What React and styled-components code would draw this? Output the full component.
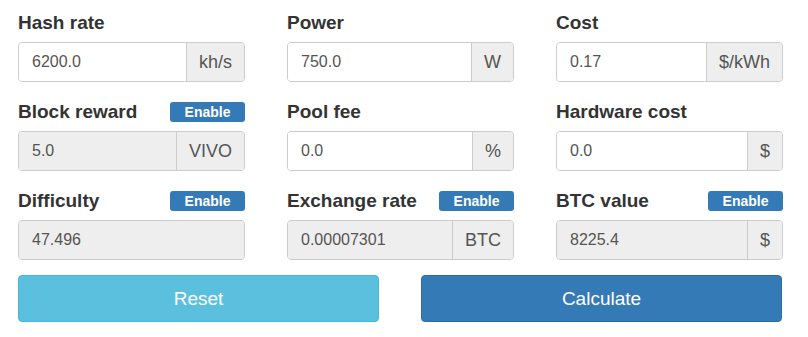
import React from 'react'
import styled, { createGlobalStyle } from 'styled-components'

const GlobalStyle = createGlobalStyle`
  body {
    margin: 0;
    background: #ffffff;
    font-family: "Liberation Sans", Arial, sans-serif;
    color: #333333;
  }
`

const Wrapper = styled.div`
  width: 808px;
  height: 337px;
  box-sizing: border-box;
  padding: 11px 25px 0 18px;
`

const Grid = styled.div`
  display: grid;
  grid-template-columns: repeat(3, 227px);
  column-gap: 42px;
  row-gap: 18px;
`

const Field = styled.div`
  display: flex;
  flex-direction: column;
`

const FieldHead = styled.div`
  height: 24px;
  margin-bottom: 7px;
  display: flex;
  align-items: center;
  justify-content: space-between;
`

const Label = styled.label`
  font-size: 19px;
  font-weight: bold;
  color: #333333;
`

const Badge = styled.span`
  display: inline-block;
  width: 75px;
  height: 20px;
  line-height: 20px;
  text-align: center;
  border-radius: 3px;
  background: #337ab7;
  color: #ffffff;
  font-size: 14px;
  font-weight: bold;
`

const Group = styled.div`
  display: flex;
  height: 40px;
  border: 1px solid #cccccc;
  border-radius: 4px;
  box-sizing: border-box;
  overflow: hidden;
  box-shadow: inset 0 1px 1px rgba(0, 0, 0, 0.075);
`

const Input = styled.div`
  flex: 1;
  display: flex;
  align-items: center;
  padding-left: 13px;
  font-size: 16px;
  color: #555555;
  background: ${p => (p.$disabled ? '#eeeeee' : '#ffffff')};
`

const Addon = styled.div`
  display: flex;
  align-items: center;
  justify-content: center;
  padding: 0 12px;
  border-left: 1px solid #cccccc;
  background: #eeeeee;
  font-size: 18px;
  color: #555555;
`

const Buttons = styled.div`
  display: grid;
  grid-template-columns: repeat(2, 361px);
  column-gap: 42px;
  margin-top: 15px;
`

const Button = styled.button`
  height: 47px;
  border: 1px solid ${p => (p.$primary ? '#2e6da4' : '#46b8da')};
  border-radius: 4px;
  background: ${p => (p.$primary ? '#337ab7' : '#5bc0de')};
  color: #ffffff;
  font-family: "Liberation Sans", Arial, sans-serif;
  font-size: 19px;
  cursor: pointer;
`

const fields = [
  { label: 'Hash rate', value: '6200.0', unit: 'kh/s' },
  { label: 'Power', value: '750.0', unit: 'W' },
  { label: 'Cost', value: '0.17', unit: '$/kWh' },
  { label: 'Block reward', value: '5.0', unit: 'VIVO', badge: true, disabled: true },
  { label: 'Pool fee', value: '0.0', unit: '%' },
  { label: 'Hardware cost', value: '0.0', unit: '$' },
  { label: 'Difficulty', value: '47.496', badge: true, disabled: true },
  { label: 'Exchange rate', value: '0.00007301', unit: 'BTC', badge: true, disabled: true },
  { label: 'BTC value', value: '8225.4', unit: '$', badge: true, disabled: true },
]

const App = () => {
  return (
    <Wrapper>
      <GlobalStyle />
      <Grid>
        {fields.map(f => (
          <Field key={f.label}>
            <FieldHead>
              <Label>{f.label}</Label>
              {f.badge && <Badge>Enable</Badge>}
            </FieldHead>
            <Group>
              <Input $disabled={f.disabled}>{f.value}</Input>
              {f.unit && <Addon>{f.unit}</Addon>}
            </Group>
          </Field>
        ))}
      </Grid>
      <Buttons>
        <Button>Reset</Button>
        <Button $primary>Calculate</Button>
      </Buttons>
    </Wrapper>
  )
}

export default App
